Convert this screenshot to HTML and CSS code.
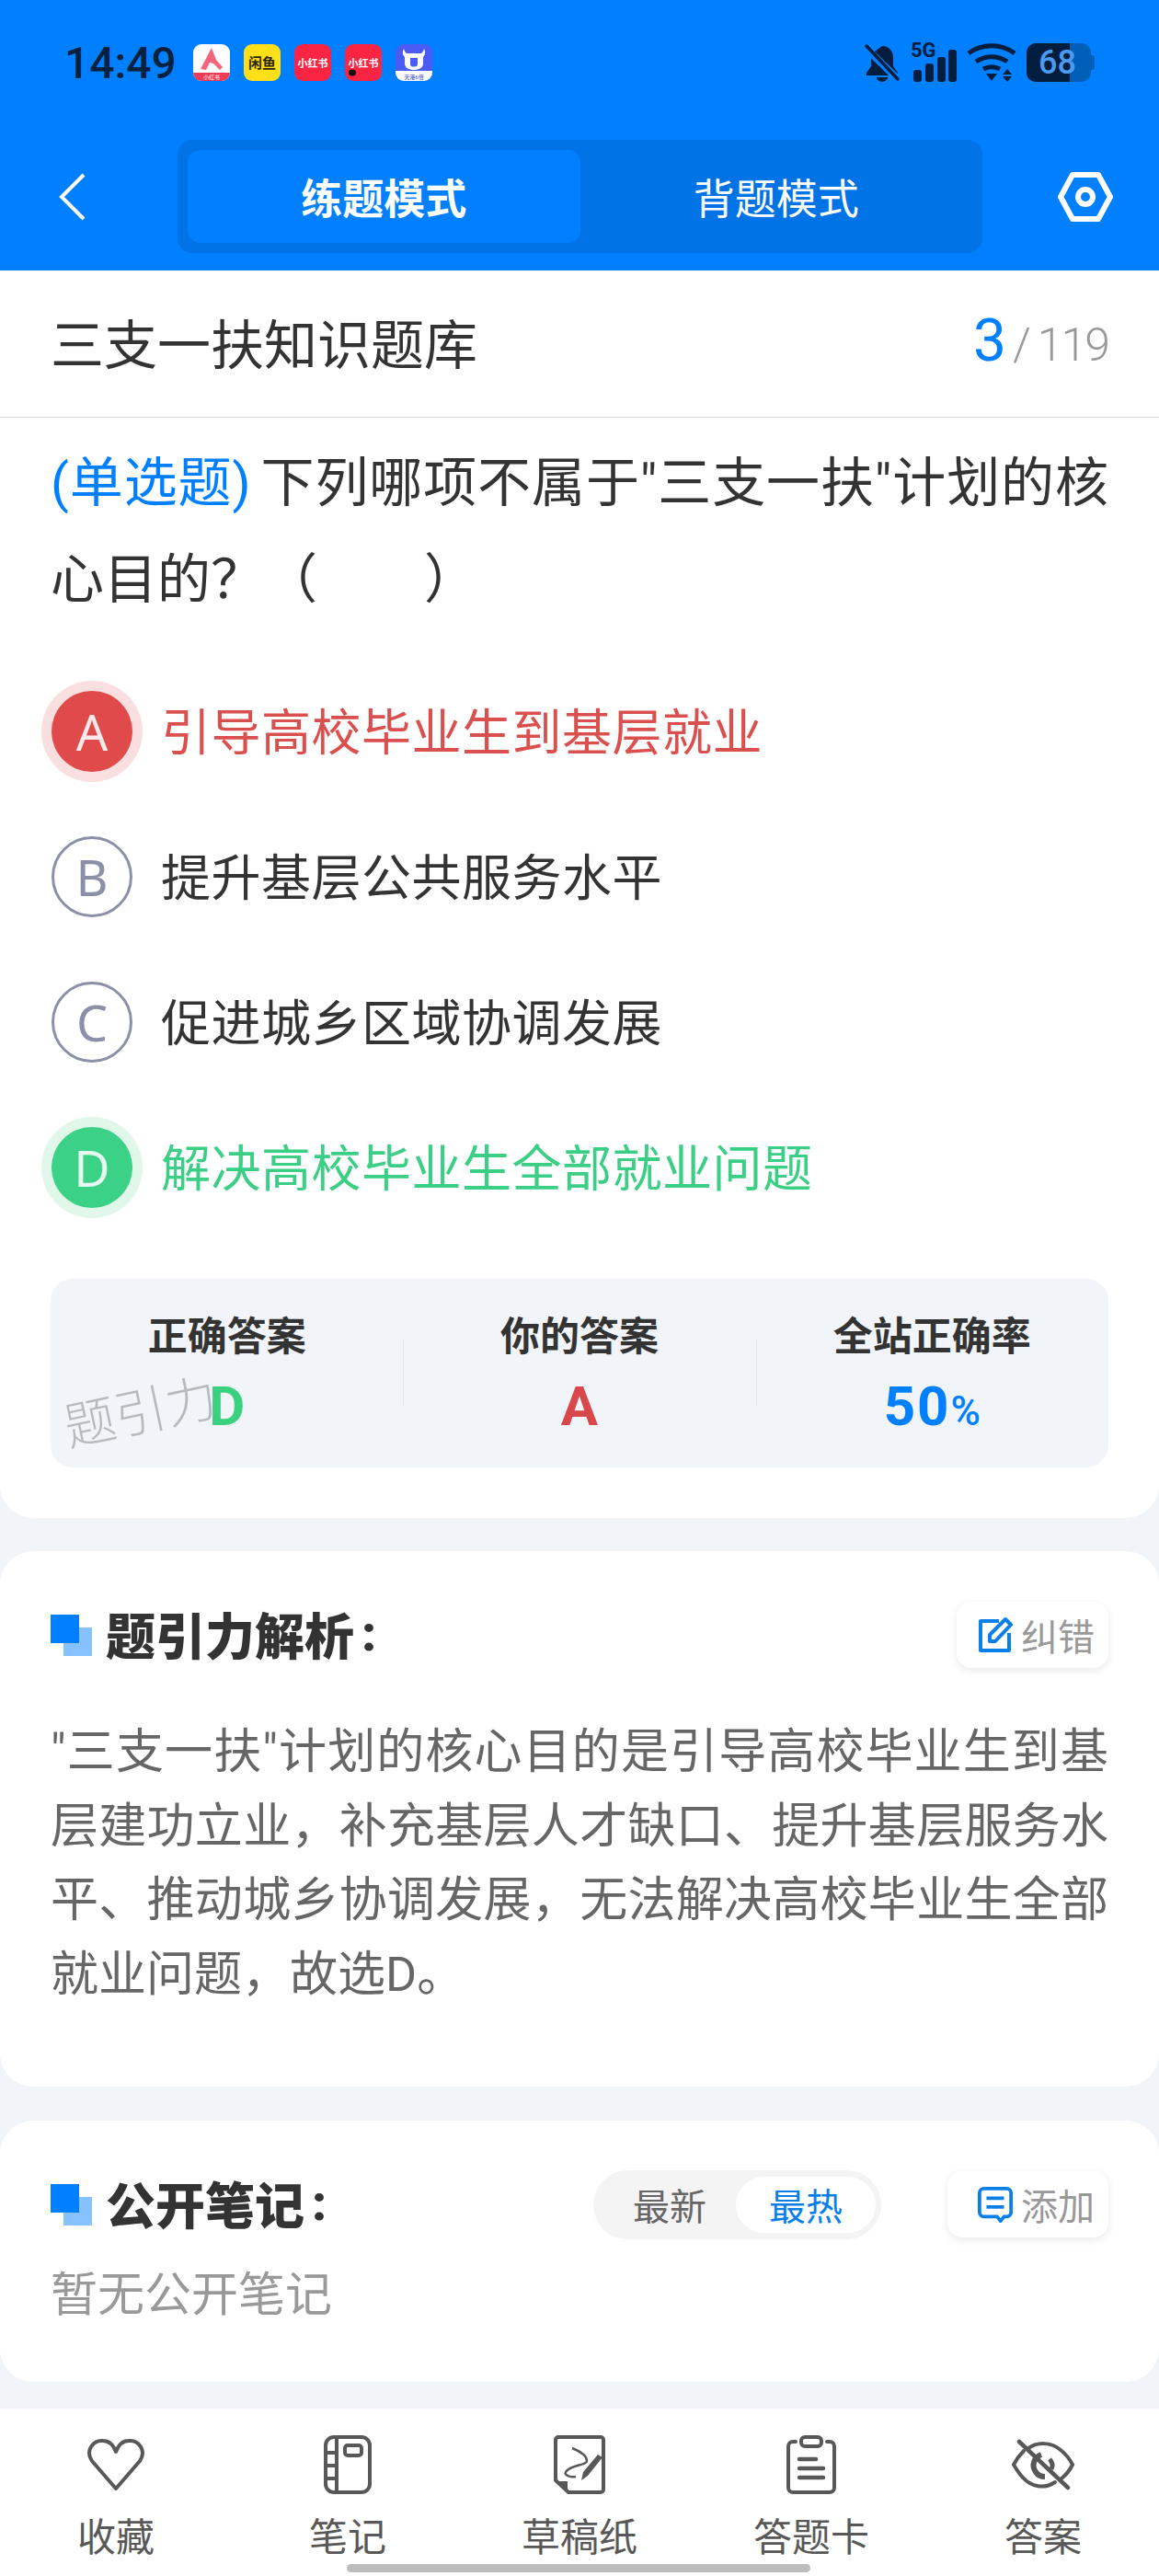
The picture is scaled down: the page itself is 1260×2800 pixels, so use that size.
FILE: index.html
```html
<!DOCTYPE html>
<html lang="zh-CN">
<head>
    <meta charset="UTF-8">
    <meta name="viewport" content="width=device-width, initial-scale=1.0">
    <title>三支一扶知识题库</title>
    <link rel="stylesheet" href="styles.css">
</head>
<body>
<div class="page">

    <header class="header">
        <div class="status-bar">
            <span class="time">14:49</span>
            <div class="app-icons">
                <svg class="app-icon" viewBox="0 0 40 40"><rect width="40" height="40" rx="9" fill="#fff"/><path d="M0 31h40a9 9 0 0 1-9 9H9a9 9 0 0 1-9-9z" fill="#ee3b55"/><path d="M8 27 20 4l5 13 7 8-3 3-7-7-4-1-4 8z" fill="#f2677d"/><text x="20" y="38" class="tiny white" text-anchor="middle">小红书</text></svg>
                <svg class="app-icon" viewBox="0 0 40 40"><rect width="40" height="40" rx="9" fill="#ffdf17"/><text x="20" y="26" class="logo dark" text-anchor="middle">闲鱼</text></svg>
                <svg class="app-icon" viewBox="0 0 40 40"><rect width="40" height="40" rx="9" fill="#fb2543"/><text x="20" y="25" class="logo white" text-anchor="middle">小红书</text></svg>
                <svg class="app-icon" viewBox="0 0 40 40"><rect width="40" height="40" rx="9" fill="#fb2543"/><text x="20" y="25" class="logo white" text-anchor="middle">小红书</text><ellipse cx="8" cy="31" rx="4" ry="3.5" fill="#111"/></svg>
                <svg class="app-icon" viewBox="0 0 40 40"><rect width="40" height="40" rx="9" fill="#4a5cf5"/><path d="M0 29h40v2a9 9 0 0 1-9 9H9a9 9 0 0 1-9-9z" fill="#fff"/><path d="M9 5c1 3 2 5 4 5h14c2 0 3-2 4-5 2 4 1 7-1 9v7c0 5-5 7-10 7s-10-2-10-7v-7C8 12 7 9 9 5zm7 10v7c0 2 2 2.500 4 2.500s4-.5 4-2.500v-7z" fill="#fff"/><text x="20" y="38" class="tiny blue-ink" text-anchor="middle">天港6倍</text></svg>
            </div>
            <div class="status-right">
                <svg class="bell" viewBox="0 0 40 42"><path d="M20 3c8 0 12 6 12 13v9l5 7v3H3v-3l5-7v-9c0-2 .5-4 1-5z" fill="#021d3d"/><path d="M14 37h12a6 5 0 0 1-12 0z" fill="#021d3d"/><path d="M1 4 38 40" stroke="#0080ff" stroke-width="8"/><path d="M3 3 37 39" stroke="#021d3d" stroke-width="3.500" stroke-linecap="round"/></svg>
                <div class="signal">
                    <span class="signal-5g">5G</span>
                    <svg class="signal-bars" viewBox="0 0 48 35"><rect x="1" y="22" width="9" height="13" rx="3"/><rect x="14" y="15" width="9" height="20" rx="3"/><rect x="27" y="8" width="9" height="27" rx="3"/><rect x="39" y="0" width="9" height="35" rx="3"/></svg>
                </div>
                <svg class="wifi" viewBox="0 0 54 42"><g fill="none" stroke="#021d3d" stroke-width="5"><path d="M2 11c14-11 36-11 50 0"/><path d="M10 20c10-7 24-7 34 0"/><path d="M18 28c6-3 12-3 18 0"/></g><path d="M21 33h12l-6 8zM44 28l5 6H39zM39 36h10l-5 6z" fill="#021d3d"/></svg>
                <div class="battery">
                    <div class="battery-body"><span class="battery-num">68</span><div class="battery-fill"></div></div>
                    <div class="battery-nub"></div>
                </div>
            </div>
        </div>
        <div class="nav-row">
            <svg class="back" viewBox="0 0 30 52"><path d="M27 2 3 26l24 24" fill="none" stroke="#fff" stroke-width="4"/></svg>
            <div class="mode-tabs">
                <div class="mode-tab active">练题模式</div>
                <div class="mode-tab">背题模式</div>
            </div>
            <svg class="settings" viewBox="0 0 60 54"><path d="M16 3h28l13 24-13 24H16L3 27z" fill="none" stroke="#fff" stroke-width="6" stroke-linejoin="round"/><circle cx="30" cy="27" r="8" fill="none" stroke="#fff" stroke-width="6"/></svg>
        </div>
    </header>

    <section class="card question-card">
        <div class="title-row">
            <span class="bank-title">三支一扶知识题库</span>
            <span class="counter"><b>3</b><i>/</i>119</span>
        </div>
        <div class="question">
            <p class="q-line"><span class="q-type">(单选题)</span>下列哪项不属于"三支一扶"计划的核心目的&#xFF1F;&#xFF08;&#x3000;&#x3000;&#xFF09;</p>
        </div>
        <ul class="options">
            <li class="option wrong"><span class="letter">A</span><span class="opt-text">引导高校毕业生到基层就业</span></li>
            <li class="option"><span class="letter">B</span><span class="opt-text">提升基层公共服务水平</span></li>
            <li class="option"><span class="letter">C</span><span class="opt-text">促进城乡区域协调发展</span></li>
            <li class="option right"><span class="letter">D</span><span class="opt-text">解决高校毕业生全部就业问题</span></li>
        </ul>
        <div class="stats">
            <div class="stat">
                <div class="stat-label">正确答案</div>
                <div class="stat-value green">D</div>
            </div>
            <div class="stat">
                <div class="stat-label">你的答案</div>
                <div class="stat-value red">A</div>
            </div>
            <div class="stat">
                <div class="stat-label">全站正确率</div>
                <div class="stat-value blue">50<small>%</small></div>
            </div>
            <span class="watermark">题引力</span>
        </div>
    </section>

    <section class="card analysis-card">
        <div class="card-head">
            <h3 class="card-title"><span class="squares"></span>题引力解析<span class="colon">:</span></h3>
            <div class="mini-btn">
                <svg viewBox="0 0 40 40"><path d="M24 5H4v32h31V18" fill="none" stroke="#0b7fe8" stroke-width="4" stroke-linejoin="round"/><path d="M14 27V20L31 3l6 6-17 18z" fill="none" stroke="#0b7fe8" stroke-width="4" stroke-linejoin="round"/></svg>
                纠错
            </div>
        </div>
        <p class="analysis">"三支一扶"计划的核心目的是引导高校毕业生到基层建功立业&#xFF0C;补充基层人才缺口、提升基层服务水平、推动城乡协调发展&#xFF0C;无法解决高校毕业生全部就业问题&#xFF0C;故选D。</p>
    </section>

    <section class="card notes-card">
        <div class="card-head">
            <h3 class="card-title"><span class="squares"></span>公开笔记<span class="colon">:</span></h3>
            <div class="head-right">
                <div class="sort">
                    <span class="sort-item">最新</span>
                    <span class="sort-item active">最热</span>
                </div>
                <div class="mini-btn add-btn">
                    <svg viewBox="0 0 42 42"><path d="M8 3h26a5 5 0 0 1 5 5v22a5 5 0 0 1-5 5h-3l-4 5-4-5H8a5 5 0 0 1-5-5V8a5 5 0 0 1 5-5z" fill="none" stroke="#0b7fe8" stroke-width="4"/><path d="M11 14h20M11 24h20" stroke="#0b7fe8" stroke-width="4"/></svg>
                    添加
                </div>
            </div>
        </div>
        <p class="no-notes">暂无公开笔记</p>
    </section>

    <nav class="bottom-nav">
        <div class="nav-item">
            <div class="nav-icon"><svg width="64" height="58" viewBox="0 0 64 58"><path d="M32 55 6 25C-2 13 8 2 18 3c6 0 11 4 14 12 3-8 8-12 14-12 10-1 20 10 12 22z" fill="none" stroke="#585858" stroke-width="4" stroke-linejoin="round"/></svg></div>
            <span>收藏</span>
        </div>
        <div class="nav-item">
            <div class="nav-icon"><svg width="52" height="64" viewBox="0 0 52 64"><rect x="2" y="2" width="48" height="60" rx="9" fill="none" stroke="#585858" stroke-width="4"/><path d="M14 2v60M2 19h12M2 33h12M2 47h12" stroke="#585858" stroke-width="4"/><rect x="23" y="11" width="18" height="11" rx="3" fill="none" stroke="#585858" stroke-width="4"/></svg></div>
            <span>笔记</span>
        </div>
        <div class="nav-item">
            <div class="nav-icon"><svg width="56" height="64" viewBox="0 0 56 64"><path d="M5 2h46a3 3 0 0 1 3 3v54a3 3 0 0 1-3 3H16L2 49V5a3 3 0 0 1 3-3z" fill="none" stroke="#585858" stroke-width="4" stroke-linejoin="round"/><path d="M3 50h12v11z" fill="#585858"/><path d="M20 14c10 4 16 8 16 14 0 5-18 4-23 12-2 4 6 6 11 5" fill="none" stroke="#585858" stroke-width="2.500"/><path d="M53 24 37 44l-7 5 2-9 16-19z" fill="#585858"/></svg></div>
            <span>草稿纸</span>
        </div>
        <div class="nav-item">
            <div class="nav-icon"><svg width="54" height="64" viewBox="0 0 54 64"><path d="M10 7H7a5 5 0 0 0-5 5v45a5 5 0 0 0 5 5h40a5 5 0 0 0 5-5V12a5 5 0 0 0-5-5h-3" fill="none" stroke="#585858" stroke-width="4" stroke-linecap="round"/><rect x="16" y="2" width="22" height="10" rx="4" fill="none" stroke="#585858" stroke-width="4"/><path d="M14 26h18M14 36h26M14 46h26" stroke="#585858" stroke-width="4.500" stroke-linecap="round"/></svg></div>
            <span>答题卡</span>
        </div>
        <div class="nav-item">
            <div class="nav-icon"><svg width="70" height="56" viewBox="0 0 70 56"><path d="M18 11C28 3 44 3 54 12c5 4 10 10 13 16-3 6-7 11-12 15M48 47C36 55 22 52 13 42c-4-4-7-9-10-14 3-6 7-11 11-15" fill="none" stroke="#585858" stroke-width="4" stroke-linecap="round"/><path d="M33 17c-8 3-11 12-6 19 2 3 6 5 10 5" fill="none" stroke="#585858" stroke-width="6"/><path d="M42 22c3 3 4 7 2 11" fill="none" stroke="#585858" stroke-width="5"/><path d="M9 3 62 53" stroke="#585858" stroke-width="4.500" stroke-linecap="round"/></svg></div>
            <span>答案</span>
        </div>
    </nav>

    <div class="home-bar"></div>
</div>
</body>
</html>
```

FILE: styles.css
```css
* {
    box-sizing: border-box;
}
body {
    margin: 0;
    font-family: Roboto, "Noto Sans CJK SC", sans-serif;
    color: #333;
}
.page {
    position: relative;
    width: 1260px;
    height: 2800px;
    overflow: hidden;
    background: #f1f5f9;
}

/* header */
.header {
    height: 294px;
    padding-top: 46px;
    background: #0080ff;
}
.status-bar {
    display: flex;
    align-items: center;
    height: 44px;
    padding: 0 70px;
}
.time {
    font-size: 48px;
    font-weight: 500;
    color: #04223f;
    width: 140px;
}
.app-icons {
    display: flex;
    gap: 15px;
}
.app-icon {
    width: 40px;
    height: 40px;
}
.tiny {
    font-size: 6px;
}
.logo {
    font-size: 11px;
    font-weight: 700;
}
.white {
    fill: #fff;
}
.dark {
    fill: #2b2400;
    font-size: 15px;
}
.blue-ink {
    fill: #2a47c8;
}
.status-right {
    display: flex;
    align-items: center;
    margin-left: auto;
    gap: 11px;
}
.bell {
    width: 40px;
    height: 42px;
}
.signal {
    position: relative;
    width: 50px;
    height: 42px;
}
.signal-5g {
    position: absolute;
    left: 0;
    top: -4px;
    font-size: 22px;
    line-height: 24px;
    font-weight: 700;
    color: #021d3d;
}
.signal-bars {
    position: absolute;
    left: 2px;
    bottom: 0;
    width: 48px;
    height: 35px;
    fill: #021d3d;
}
.wifi {
    width: 54px;
    height: 42px;
}
.battery {
    display: flex;
    align-items: center;
}
.battery-body {
    position: relative;
    display: flex;
    width: 70px;
    height: 42px;
    border-radius: 10px;
    overflow: hidden;
    background: #005fb8;
}
.battery-fill {
    width: 47px;
    background: #021d3d;
}
.battery-num {
    position: absolute;
    left: 13px;
    top: 0;
    z-index: 1;
    font-size: 36px;
    line-height: 42px;
    font-weight: 500;
    color: #4a9bf0;
}
.battery-nub {
    width: 4px;
    height: 16px;
    border-radius: 0 3px 3px 0;
    background: #005fb8;
}
.nav-row {
    display: flex;
    align-items: center;
    justify-content: space-between;
    height: 123px;
    margin-top: 62px;
    padding: 0 50px 0 64px;
}
.back {
    width: 30px;
    height: 52px;
}
.mode-tabs {
    display: flex;
    width: 875px;
    height: 123px;
    padding: 11px;
    margin-left: 99px;
    border-radius: 16px;
    background: #0073e6;
}
.mode-tab {
    flex: 1;
    display: flex;
    align-items: center;
    justify-content: center;
    border-radius: 14px;
    font-size: 45px;
    color: #fff;
}
.mode-tab.active {
    background: #0080ff;
    font-weight: 700;
}
.settings {
    width: 60px;
    height: 54px;
    margin-left: 82px;
}

/* cards */
.card {
    background: #fff;
    border-radius: 36px;
}
.question-card {
    height: 1356px;
    border-radius: 0 0 36px 36px;
}
.title-row {
    display: flex;
    align-items: center;
    justify-content: space-between;
    height: 160px;
    padding: 0 55px 6px;
    border-bottom: 1px solid #d6d6d6;
}
.bank-title {
    font-size: 58px;
}
.counter {
    font-size: 50px;
    letter-spacing: -2px;
    font-weight: 300;
    color: #999;
}
.counter b {
    font-size: 64px;
    font-weight: 400;
    color: #0080ff;
}
.counter i {
    margin: 0 9px;
    font-style: normal;
}
.question {
    padding: 19px 55px 0;
}
.q-line {
    margin: 0;
    font-size: 58px;
    line-height: 105px;
    text-align: justify;
}
.q-type {
    margin-right: 10px;
    color: #0080ff;
}
.options {
    list-style: none;
    margin: 33px 0 0;
    padding: 0 0 0 56px;
}
.option {
    display: flex;
    align-items: center;
    height: 158px;
    font-size: 54px;
    letter-spacing: 0.5px;
    color: #333;
}
.opt-text {
    margin-bottom: 6px;
}
.letter {
    display: flex;
    align-items: center;
    justify-content: center;
    width: 88px;
    height: 88px;
    margin-right: 31px;
    border: 3px solid #8b90a8;
    border-radius: 50%;
    font-family: "Noto Sans", sans-serif;
    font-size: 54px;
    letter-spacing: 0;
    color: #8b90a8;
}
.option.wrong {
    color: #d9504f;
}
.wrong .letter {
    border: 0;
    background: #e04a4b;
    box-shadow: 0 0 0 11px #f9dfdf;
    color: #fde9e9;
}
.option.right {
    color: #3bcf85;
}
.right .letter {
    border: 0;
    background: #3bd186;
    box-shadow: 0 0 0 11px #e0f7ea;
    color: #e5fbf0;
}

/* answer summary */
.stats {
    position: relative;
    display: flex;
    height: 205px;
    margin: 42px 55px 0;
    padding-top: 41px;
    border-radius: 24px;
    background: #f1f5f9;
}
.stat {
    flex: 1;
    height: 112px;
    text-align: center;
}
.stat + .stat {
    position: relative;
}
.stat + .stat::before {
    content: "";
    position: absolute;
    left: 0;
    top: 25px;
    height: 72px;
    width: 1px;
    background: #e4e8ec;
}
.stat-label {
    font-size: 43px;
    line-height: 44px;
    font-weight: 700;
}
.stat-value {
    margin-top: 24px;
    font-size: 60px;
    line-height: 60px;
    font-weight: 700;
}
.blue {
    letter-spacing: 2px;
}
.stat-value small {
    font-size: 44px;
    font-weight: 500;
    letter-spacing: 0;
}
.green {
    color: #39d180;
}
.red {
    color: #d9474a;
}
.blue {
    color: #0080ff;
}
.watermark {
    position: absolute;
    left: 14px;
    top: 111px;
    font-size: 56px;
    line-height: 70px;
    font-weight: 300;
    color: rgba(0, 0, 0, 0.24);
    transform: rotate(-12deg);
}

.analysis-card {
    height: 582px;
    margin-top: 36px;
    padding: 54px 55px 0;
}
.notes-card {
    height: 284px;
    margin-top: 37px;
    padding: 54px 55px 0;
}
.card-head {
    display: flex;
    align-items: center;
    justify-content: space-between;
    height: 74px;
}
.head-right {
    display: flex;
    align-items: center;
    gap: 72px;
}
.card-title {
    display: flex;
    align-items: center;
    margin: 0;
    padding-bottom: 3px;
    font-size: 54px;
    font-weight: 900;
    color: #333;
}
.colon {
    margin-left: 8px;
}
.squares {
    width: 45px;
    height: 45px;
    margin: 3px 15px 0 0;
    background: linear-gradient(#0080ff, #0080ff) 0 0 / 31px 31px no-repeat,
        linear-gradient(#85c2ff, #85c2ff) 14px 14px / 31px 31px no-repeat;
}
.mini-btn {
    display: flex;
    align-items: center;
    justify-content: flex-end;
    gap: 8px;
    height: 72px;
    padding: 0 15px 0 22px;
    border-radius: 16px;
    background: #fff;
    box-shadow: 0 3px 10px rgba(0, 0, 0, 0.09);
    font-size: 40px;
    color: #999;
}
.add-btn {
    width: 175px;
}
.mini-btn svg {
    width: 40px;
    height: 40px;
}
.analysis {
    margin: 51px 0 0;
    font-size: 52px;
    line-height: 80.5px;
    text-align: justify;
    color: #666;
}
.sort {
    display: flex;
    align-items: center;
    justify-content: space-between;
    width: 313px;
    height: 75px;
    padding: 0 6px 0 43px;
    border-radius: 38px;
    background: #f4f4f4;
    font-size: 40px;
    color: #666;
}
.sort-item.active {
    display: flex;
    align-items: center;
    justify-content: center;
    width: 152px;
    height: 61px;
    border-radius: 31px;
    background: #fff;
    color: #0b7fe8;
}
.no-notes {
    margin: 27px 0 0;
    font-size: 51px;
    line-height: 70px;
    color: #999;
}

/* bottom nav */
.bottom-nav {
    display: flex;
    height: 182px;
    margin-top: 29px;
    padding-top: 29px;
    background: #fff;
}
.nav-item {
    flex: 1;
    text-align: center;
    font-size: 42px;
    line-height: 50px;
    color: #585858;
}
.nav-icon {
    display: flex;
    align-items: center;
    justify-content: center;
    height: 64px;
    margin-bottom: 23px;
}
.home-bar {
    position: absolute;
    left: 377px;
    top: 2787px;
    width: 504px;
    height: 9px;
    border-radius: 5px;
    background: #bdbdbd;
}
```
